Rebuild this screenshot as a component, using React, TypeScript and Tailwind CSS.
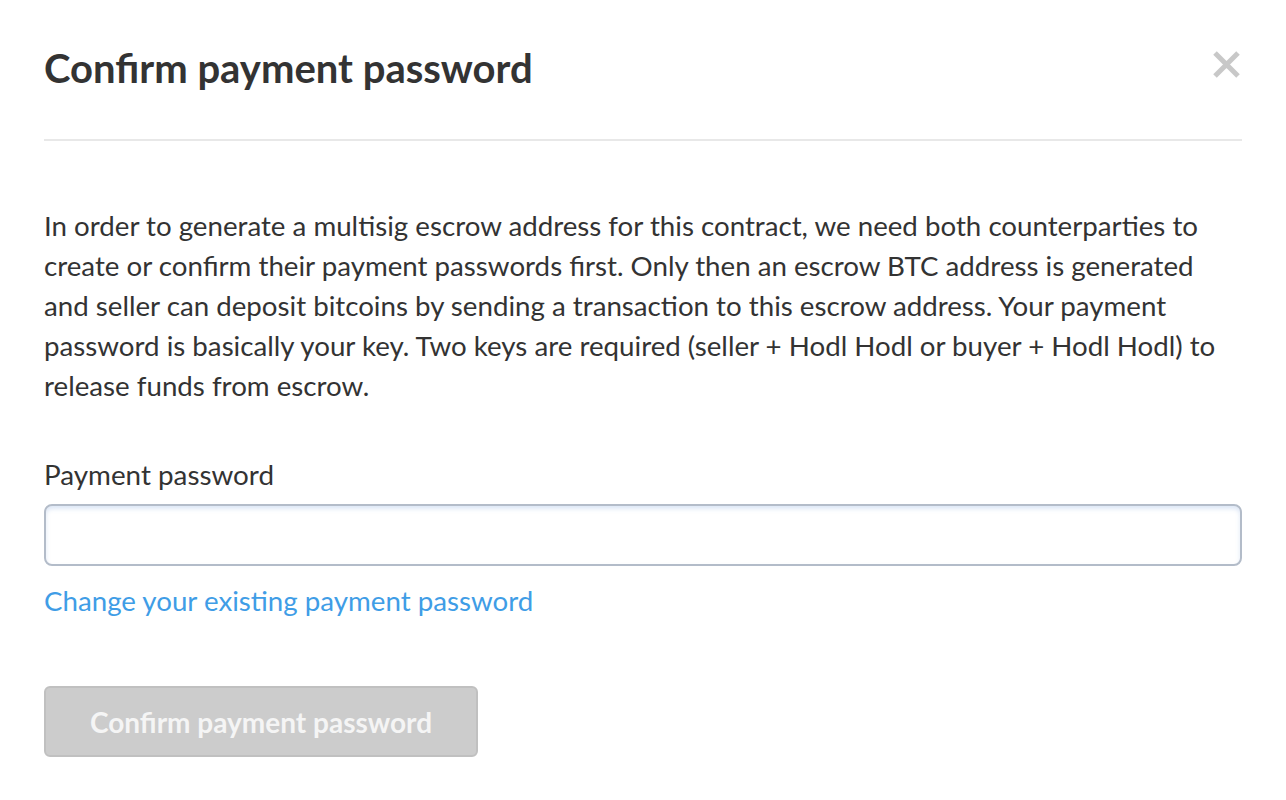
export default function App() {
  return (
    <div
      className="min-h-screen bg-white px-[44px] text-[#333333]"
      style={{ fontFamily: 'Lato, "Open Sans", sans-serif' }}
    >
      <div className="flex items-start justify-between pt-[40px] pb-[43px] border-b-2 border-[#e8e8e8]">
        <h1 className="text-[40px] leading-[56px] font-bold">Confirm payment password</h1>
        <button className="mt-[11px] mr-[2px] text-[#c8c8c8]" aria-label="Close">
          <svg width="27" height="27" viewBox="0 0 27 27" className="block">
            <path d="M2 2 L25 25 M25 2 L2 25" stroke="currentColor" strokeWidth="5" />
          </svg>
        </button>
      </div>

      <p className="mt-[65px] text-[27.7px] leading-[40px]">
        In order to generate a multisig escrow address for this contract, we need both counterparties to
        <br />
        create or confirm their payment passwords first. Only then an escrow BTC address is generated
        <br />
        and seller can deposit bitcoins by sending a transaction to this escrow address. Your payment
        <br />
        password is basically your key. Two keys are required (seller + Hodl Hodl or buyer + Hodl Hodl) to
        <br />
        release funds from escrow.
      </p>

      <div className="mt-[49px]">
        <label className="block text-[27.8px] leading-[40px]">Payment password</label>
        <input
          type="password"
          className="mt-[9px] block w-full h-[62px] rounded-[8px] border-2 border-[#b3bcc9] bg-white shadow-[inset_0_3px_4px_rgba(120,160,220,0.25)] outline-none"
        />
        <a href="#" className="mt-[15px] inline-block text-[27.7px] leading-[40px] text-[#3f9de6]">
          Change your existing payment password
        </a>
      </div>

      <button
        disabled
        className="mt-[65px] block w-[434px] h-[71px] rounded-[6px] border-2 border-[#c0c0c0] bg-[#cccccc] text-[28px] font-bold text-[#f5f5f5]"
      >
        Confirm payment password
      </button>
    </div>
  );
}
